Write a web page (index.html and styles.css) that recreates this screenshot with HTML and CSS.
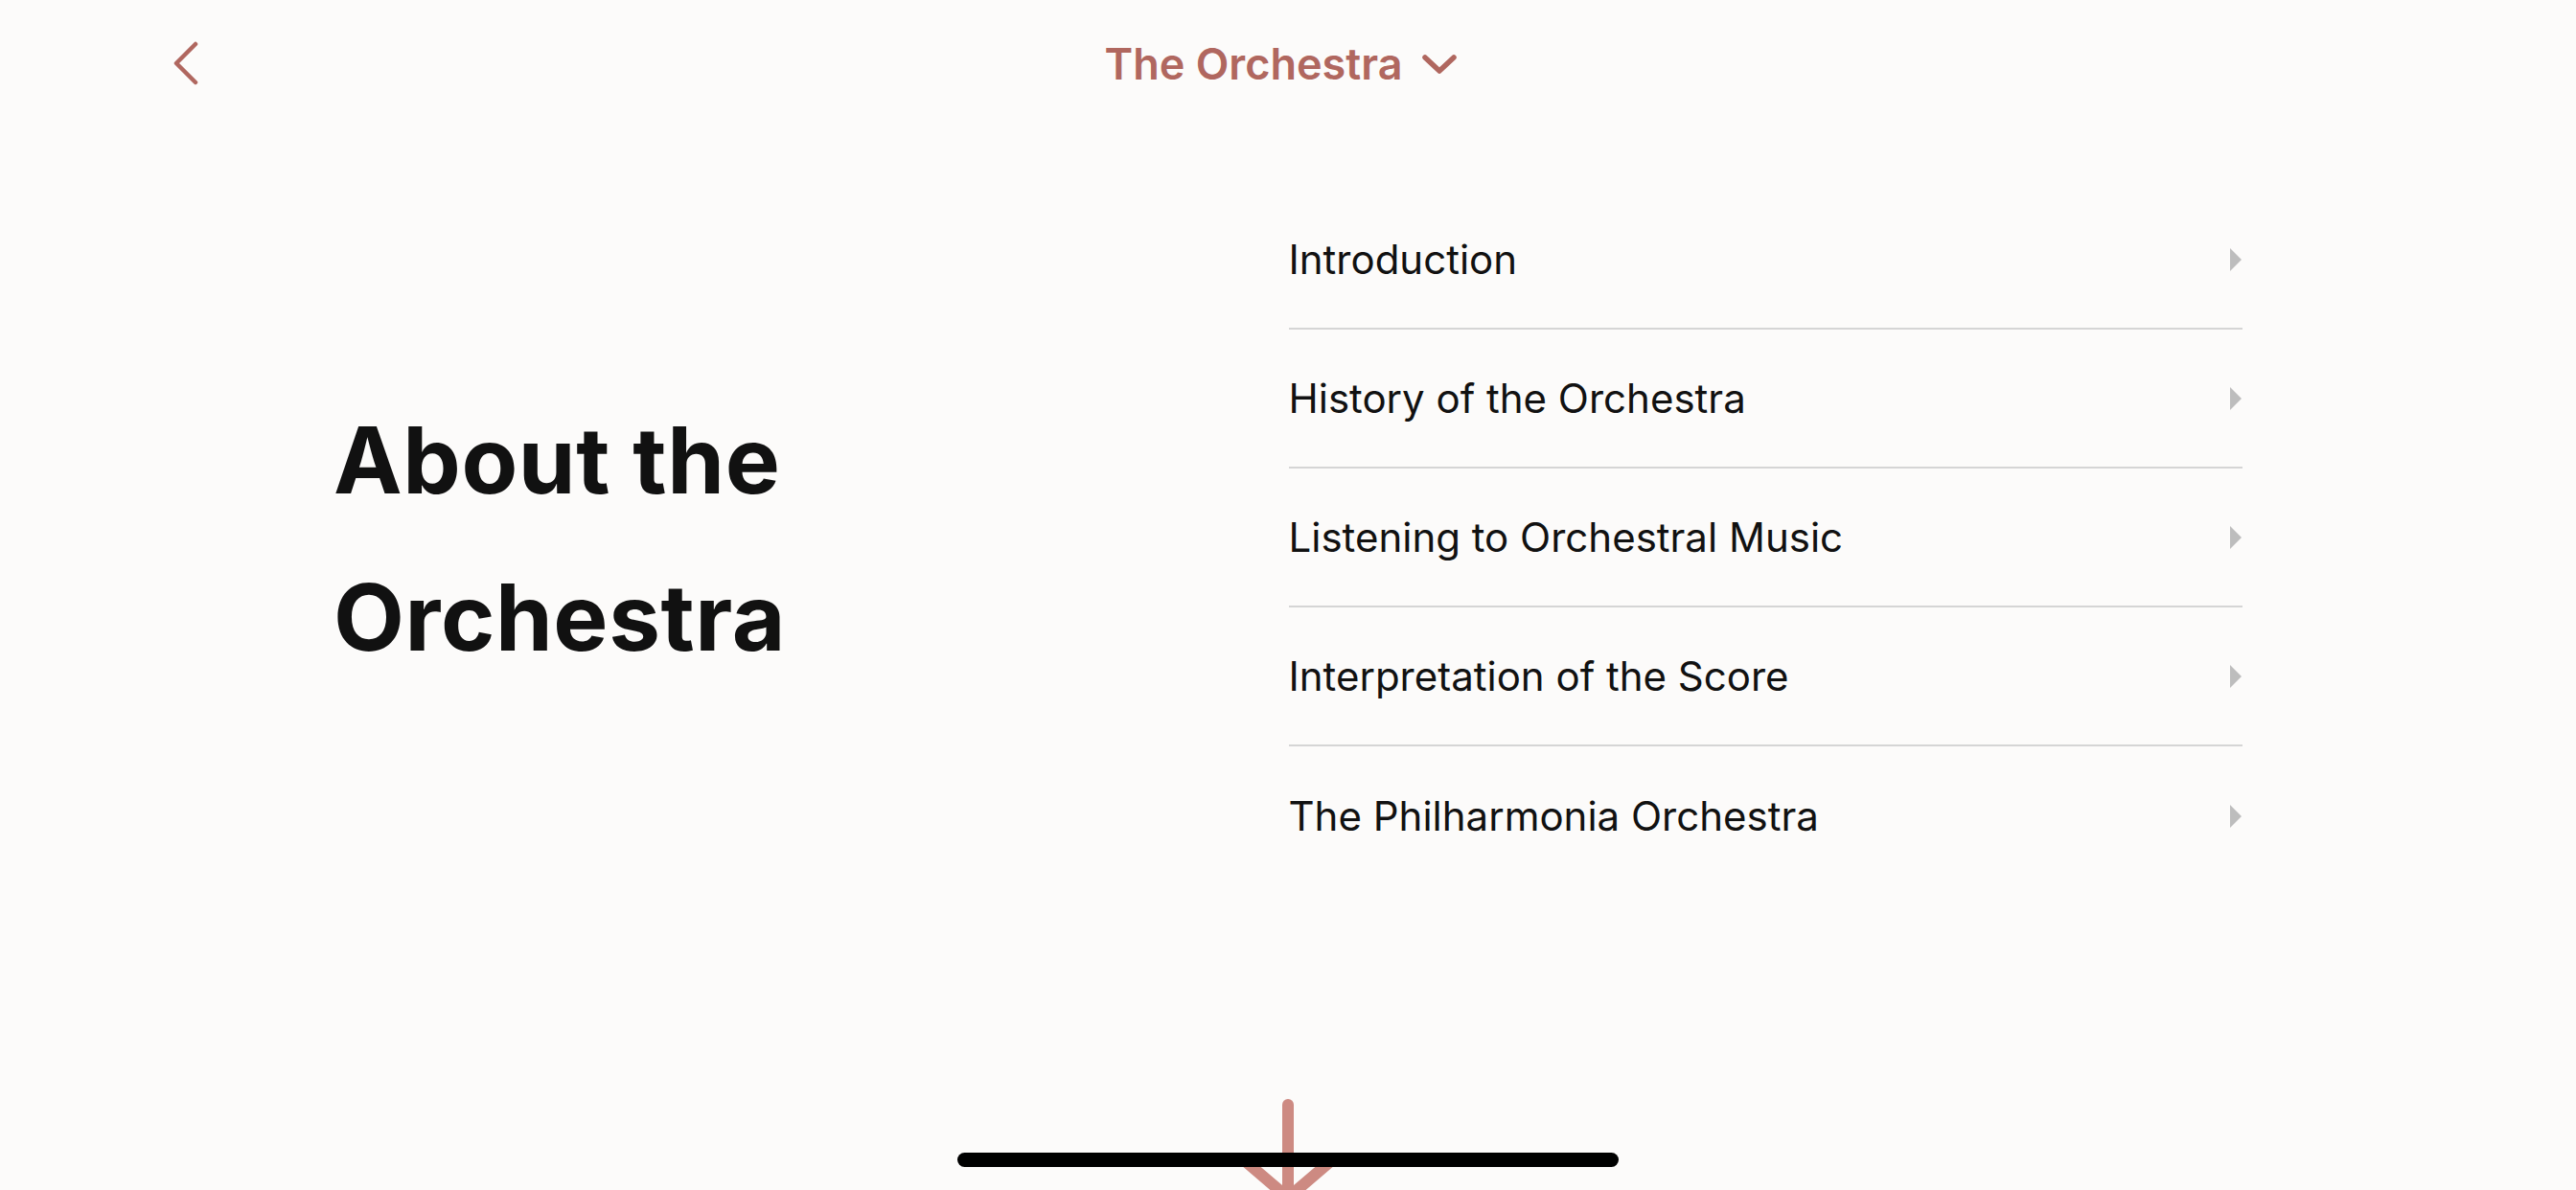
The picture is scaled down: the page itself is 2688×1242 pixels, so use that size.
FILE: index.html
```html
<!DOCTYPE html>
<html lang="en">
<head>
<meta charset="utf-8">
<title>About the Orchestra</title>
<link rel="stylesheet" href="styles.css">
</head>
<body>
<div class="screen">
  <header class="topbar">
    <div class="topbar-left">
      <button class="back" aria-label="Back">
        <svg width="28" height="46" viewBox="0 0 28 46"><polyline points="23,3 3,23 23,43" fill="none" stroke="#b0675f" stroke-width="4.5" stroke-linecap="round" stroke-linejoin="round"/></svg>
      </button>
    </div>
    <div class="title">
      <span>The Orchestra</span>
      <svg class="title-chev" width="38" height="24" viewBox="0 0 38 24"><polyline points="4,5 19,19 34,5" fill="none" stroke="#b0675f" stroke-width="5.5" stroke-linecap="round" stroke-linejoin="round"/></svg>
    </div>
    <div class="topbar-right"></div>
  </header>
  <main class="content">
    <section class="intro">
      <h1 class="heading">About the<br>Orchestra</h1>
    </section>
    <ul class="menu">
      <li class="menu-row"><span>Introduction</span><i class="tri"></i></li>
      <li class="menu-row"><span>History of the Orchestra</span><i class="tri"></i></li>
      <li class="menu-row"><span>Listening to Orchestral Music</span><i class="tri"></i></li>
      <li class="menu-row"><span>Interpretation of the Score</span><i class="tri"></i></li>
      <li class="menu-row"><span>The Philharmonia Orchestra</span><i class="tri"></i></li>
    </ul>
  </main>
  <svg class="scroll-arrow" width="140" height="100" viewBox="0 0 140 100"><g fill="none" stroke="#cd8a82" stroke-width="12" stroke-linecap="round" stroke-linejoin="round"><line x1="70" y1="11" x2="70" y2="110"/><polyline points="22,67 70,108 118,67"/></g></svg>
  <div class="home-indicator"></div>
</div>
</body>
</html>
```

FILE: styles.css
```css
html, body {
  margin: 0;
  padding: 0;
}
body {
  background: #fcfbfa;
  font-family: "Inter", "Noto Sans", sans-serif;
  color: #111111;
}
.screen {
  position: relative;
  width: 2688px;
  height: 1242px;
  overflow: hidden;
}
.topbar {
  height: 132px;
  display: grid;
  grid-template-columns: 1fr auto 1fr;
  align-items: center;
}
.topbar-left {
  padding-left: 181px;
  display: flex;
  align-items: center;
}
.back {
  border: 0;
  background: none;
  padding: 0;
  display: flex;
}
.title {
  display: flex;
  align-items: center;
  gap: 20px;
  color: #b0675f;
  font-size: 45px;
  font-weight: 600;
  transform: translateX(-7px);
}
.title-chev {
  margin-top: 2px;
}
.content {
  display: grid;
  grid-template-columns: 1fr 1fr;
  padding: 67px 348px 0 351px;
}
.intro {
  display: flex;
  align-items: center;
  margin-left: -3px;
}
.heading {
  margin: 0;
  font-size: 96px;
  line-height: 164px;
  font-weight: 700;
  color: #111111;
  letter-spacing: 0.6px;
}
.menu {
  list-style: none;
  margin: 0 0 0 -1px;
  padding: 0;
}
.menu-row {
  box-sizing: border-box;
  height: 145px;
  display: flex;
  align-items: center;
  justify-content: space-between;
  border-bottom: 2px solid #d5d5d5;
  font-size: 42px;
  font-weight: 400;
  color: #111111;
}
.menu-row:last-child {
  border-bottom: 0;
}
.tri {
  width: 0;
  height: 0;
  margin-right: 1px;
  border-top: 12px solid transparent;
  border-bottom: 12px solid transparent;
  border-left: 12px solid #bdbdbd;
}
.scroll-arrow {
  position: absolute;
  left: 1274px;
  top: 1142px;
}
.home-indicator {
  position: absolute;
  left: 999px;
  top: 1203px;
  width: 690px;
  height: 15px;
  border-radius: 8px;
  background: #000000;
}
```
